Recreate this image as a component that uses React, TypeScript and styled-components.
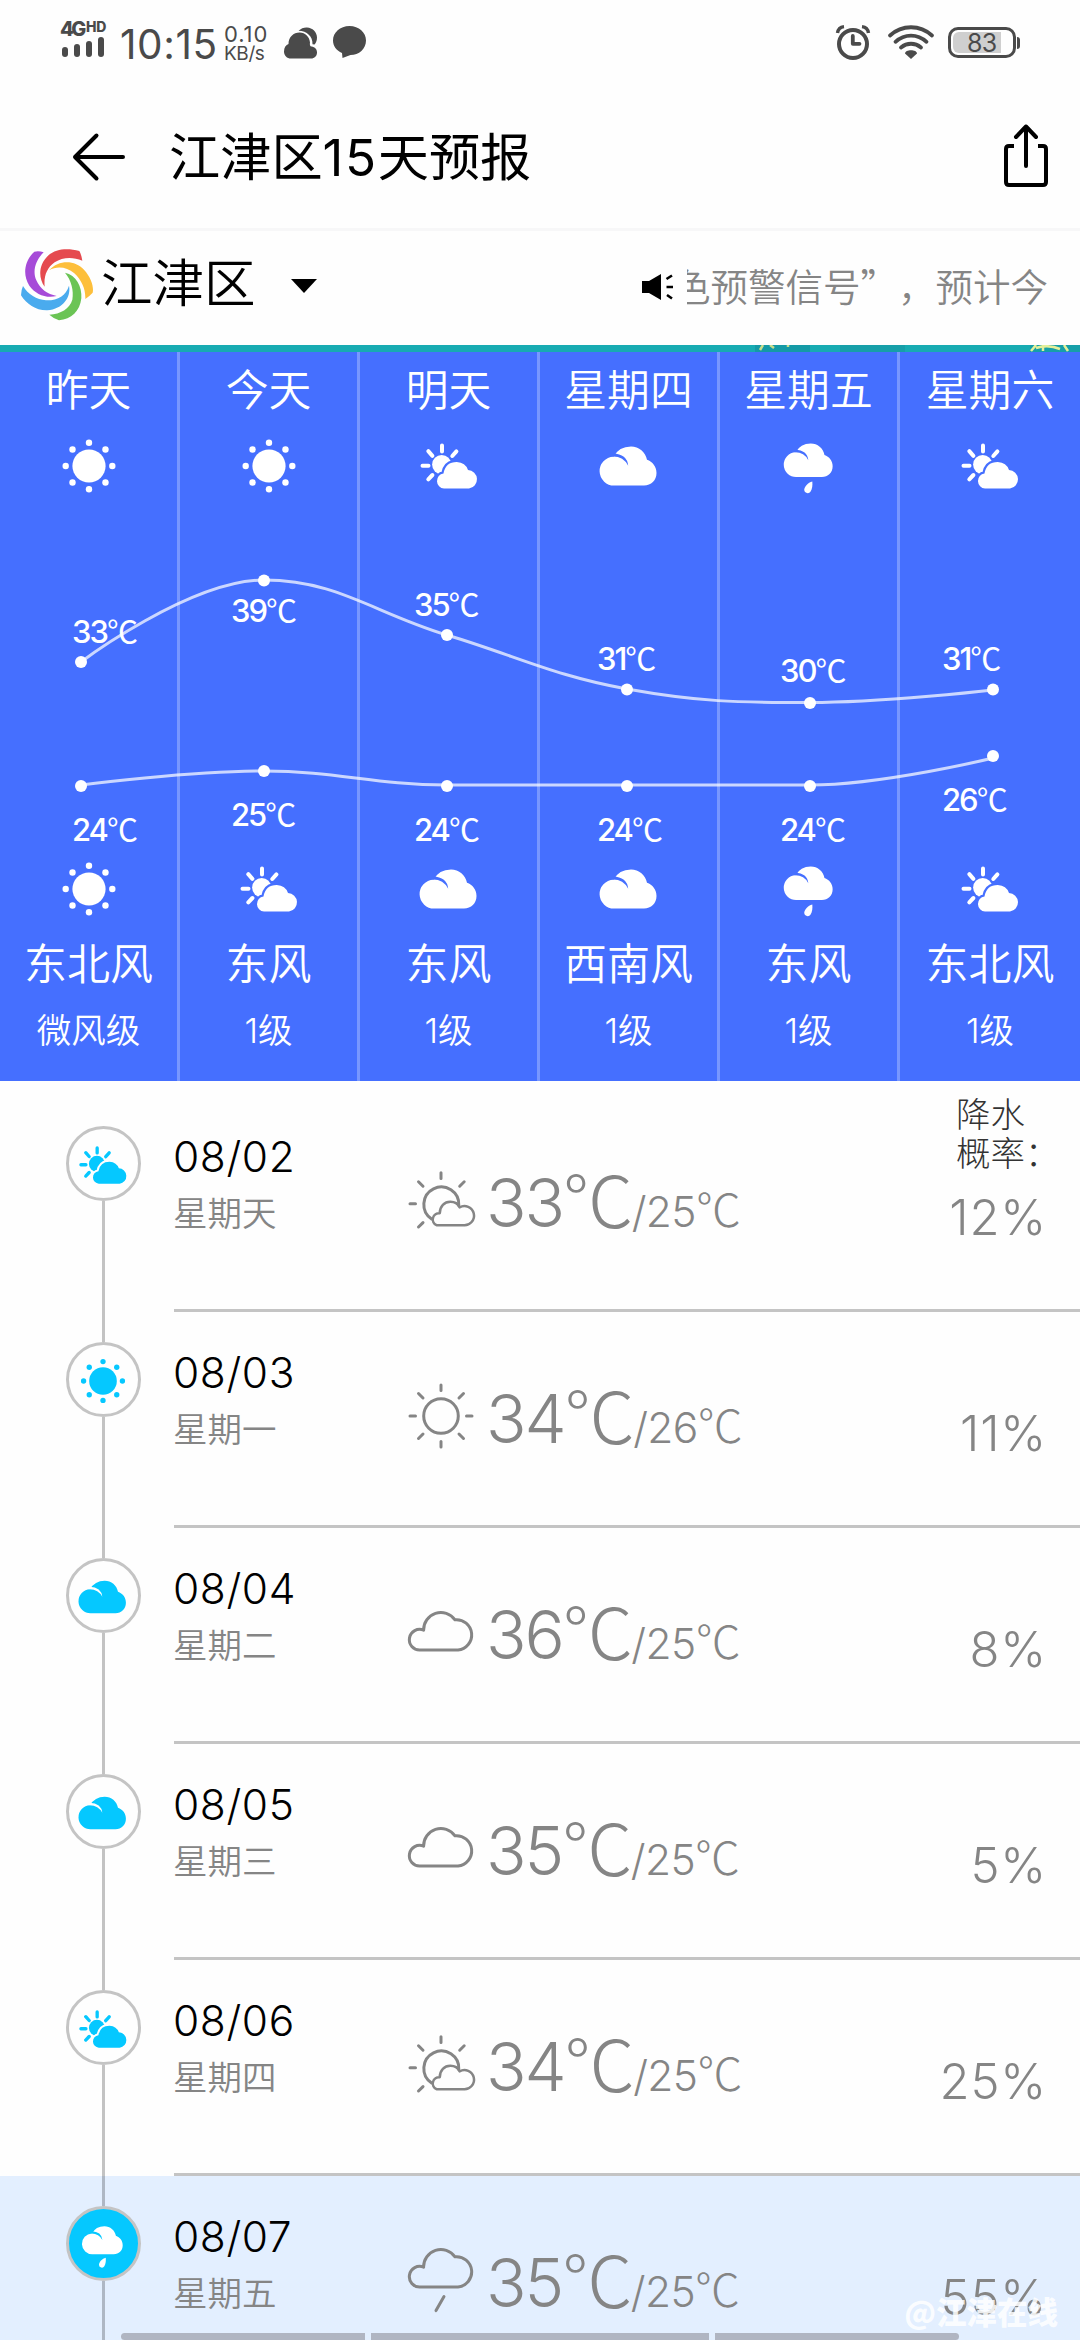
import React, { useId } from "react";
import styled, { createGlobalStyle } from "styled-components";

const GlobalStyle = createGlobalStyle`
  * { box-sizing: border-box; }
  body { margin: 0; background: #fefefe; }
`;

const GREY = "#858585";
const CYAN = "#05c8ff";

const Screen = styled.main`
  position: relative;
  display: flex;
  flex-direction: column;
  width: 1080px;
  height: 2340px;
  overflow: hidden;
  background: #fefefe;
  color: #000;
  font-family: Inter, "Noto Sans CJK SC", sans-serif;
  font-weight: 300;
  white-space: nowrap;
`;

/* ---------- status bar ---------- */

const StatusBar = styled.header`
  display: flex;
  justify-content: space-between;
  align-items: flex-start;
  flex: none;
  height: 86px;
  padding: 22px 60px 0 60px;
  color: #4a4a4a;
`;

const StatusGroup = styled.div`
  display: flex;
  align-items: flex-start;
`;

const Network = styled.div`
  display: flex;
  flex-direction: column;
  width: 46px;
`;

const NetworkLabel = styled.div`
  display: flex;
  align-items: flex-start;
  height: 15px;
  font-weight: 800;
  font-size: 20px;
  line-height: 15px;
  letter-spacing: -2.4px;
`;

const NetworkSup = styled.span`
  margin-left: 2px;
  font-size: 14px;
  line-height: 10px;
  letter-spacing: -0.2px;
`;

const SignalBars = styled.div`
  display: flex;
  align-items: flex-end;
  gap: 6px;
  height: 20px;
  padding-left: 2px;
`;

const SignalBar = styled.i<{ $h: number }>`
  width: 6px;
  height: ${(p) => p.$h}px;
  border-radius: 3px;
  background: currentColor;
`;

const Clock = styled.div`
  width: 98px;
  margin-left: 14px;
  font-size: 40.5px;
  font-weight: 400;
  line-height: 45px;
  letter-spacing: 0.6px;
`;

const Speed = styled.div`
  display: flex;
  flex-direction: column;
  width: 58px;
  margin-left: 6px;
  padding-top: 2px;
  font-weight: 400;
`;

const SpeedLine = styled.span<{ $size: number; $gap: number }>`
  font-size: ${(p) => p.$size}px;
  line-height: 20px;
  letter-spacing: ${(p) => p.$gap}px;
`;

const StatusIcon = styled.svg<{ $w: number; $h: number; $ml: number; $mt: number }>`
  display: block;
  width: ${(p) => p.$w}px;
  height: ${(p) => p.$h}px;
  margin: ${(p) => p.$mt}px 0 0 ${(p) => p.$ml}px;
  overflow: visible;
`;

const Battery = styled.div`
  display: flex;
  align-items: center;
  margin: 5px 0 0 14px;
`;

const BatteryShell = styled.div`
  width: 68px;
  height: 31px;
  padding: 2px;
  border: 3px solid currentColor;
  border-radius: 10px;
`;

const BatteryFill = styled.div`
  width: 48px;
  height: 21px;
  padding-left: 14px;
  border-radius: 6px 0 0 6px;
  background: #cfcfcf;
  font-size: 25px;
  font-weight: 400;
  line-height: 22px;
  letter-spacing: -0.8px;
`;

const BatteryTip = styled.i`
  width: 3px;
  height: 12px;
  margin-left: 1px;
  border-radius: 0 3px 3px 0;
  background: currentColor;
`;

/* ---------- title bar ---------- */

const TitleBar = styled.nav`
  display: flex;
  align-items: center;
  flex: none;
  height: 145px;
  padding: 0 30px 0 71px;
  border-bottom: 3px solid #f7f7f8;
`;

const BackIcon = styled.svg`
  width: 56px;
  height: 52px;
`;

const Title = styled.h1`
  flex: 1;
  margin: 0 0 0 42px;
  font-size: 51.2px;
  font-weight: 400;
  line-height: 60px;
`;

const Digits = styled.span`
  letter-spacing: 1.6px;
`;

const ShareIcon = styled.svg`
  width: 48px;
  height: 66px;
`;

/* ---------- city bar ---------- */

const CityBar = styled.section`
  display: flex;
  align-items: center;
  flex: none;
  height: 114px;
  padding: 0 32px 7px 21px;
`;

const Logo = styled.svg`
  width: 72px;
  height: 72px;
`;

const City = styled.div`
  width: 156px;
  margin: -4px 0 0 8px;
  font-size: 51.5px;
  line-height: 60px;
  font-weight: 350;
`;

const Caret = styled.i`
  margin: 3px 0 0 34px;
  border: 13px solid transparent;
  border-top: 14px solid #000;
  border-bottom: 0;
`;

const SpeakerIcon = styled.svg`
  width: 32px;
  height: 28px;
  margin: 5px 13px 0 auto;
`;

const Ticker = styled.div`
  display: flex;
  justify-content: flex-end;
  width: 361px;
  overflow: hidden;
  color: ${GREY};
  font-family: "Noto Sans CJK SC", sans-serif;
  font-size: 37.5px;
  font-weight: 350;
  line-height: 50px;
`;

const FullWidthMark = styled.span`
  width: 37.5px;
`;

const BannerEdge = styled.svg`
  display: block;
  flex: none;
  width: 1080px;
  height: 7px;
  background: #17abb2;
`;

/* ---------- six-day chart ---------- */

const Forecast = styled.section`
  position: relative;
  display: grid;
  grid-template-columns: repeat(6, 180px);
  flex: none;
  height: 729px;
  background: #456fff;
  color: #fff;
  font-weight: 350;
`;

const Day = styled.div`
  display: flex;
  flex-direction: column;
  align-items: center;
  padding-top: 14px;
  border-right: 3px solid rgba(255, 255, 255, 0.28);
  &:last-of-type { border-right: 0; }
`;

const DayName = styled.div`
  font-size: 42.8px;
  line-height: 50px;
`;

const DayIcon = styled.svg<{ $size: number; $mt?: number }>`
  display: block;
  width: ${(p) => p.$size}px;
  height: ${(p) => p.$size}px;
  margin-top: ${(p) => p.$mt ?? 0}px;
  overflow: visible;
`;

const Wind = styled.div`
  margin-top: 20px;
  font-size: 43px;
  line-height: 50px;
`;

const Level = styled.div`
  margin-top: 21px;
  font-size: 34.5px;
  line-height: 42px;
`;

const Chart = styled.svg`
  position: absolute;
  inset: 0;
  width: 1080px;
  height: 729px;
`;

const ChartLabel = styled.text`
  fill: #fff;
  font-size: 31px;
  font-weight: 450;
  letter-spacing: -2px;
`;

const ChartUnit = styled.tspan`
  font-family: "Noto Sans CJK SC", sans-serif;
  font-weight: 400;
`;

/* ---------- daily list ---------- */

const List = styled.section`
  display: flex;
  flex-direction: column;
  flex: none;
  padding-top: 15px;
`;

const Row = styled.article<{ $active: boolean }>`
  display: flex;
  flex: none;
  height: 216px;
  background: ${(p) => (p.$active ? "#e3efff" : "transparent")};
`;

const Timeline = styled.div`
  display: flex;
  flex-direction: column;
  align-items: center;
  width: 174px;
  padding-right: 33px;
  padding-left: 66px;
`;

const Rail = styled.i<{ $h?: number; $hidden?: boolean }>`
  width: 3px;
  height: ${(p) => (p.$h ? `${p.$h}px` : "auto")};
  flex: ${(p) => (p.$h ? "none" : "1")};
  background: ${(p) => (p.$hidden ? "transparent" : "rgba(0, 0, 0, 0.23)")};
`;

const Badge = styled.div<{ $active: boolean }>`
  display: flex;
  align-items: center;
  justify-content: center;
  flex: none;
  width: 75px;
  height: 75px;
  padding: 2px 2px 0 0;
  border: 3px solid #c4c4c4;
  border-radius: 50%;
  background: ${(p) => (p.$active ? CYAN : "#fefefe")};
  color: ${(p) => (p.$active ? "#fff" : CYAN)};
`;

const RowBody = styled.div`
  display: flex;
  flex: 1;
  color: ${GREY};
  border-bottom: 3px solid #c4c4c4;
`;

const DateCell = styled.div`
  width: 234px;
  padding-top: 36px;
`;

const DateText = styled.div`
  margin-left: -1px;
  color: #000;
  font-size: 42.5px;
  line-height: 50px;
  letter-spacing: 0.6px;
`;

const Weekday = styled.div`
  margin: 11px 0 0 -1px;
  font-size: 34.5px;
  font-weight: 350;
  line-height: 42px;
`;

const OutlineIcon = styled.svg`
  display: block;
  flex: none;
  width: 67px;
  height: 67px;
  margin-top: 71px;
  overflow: visible;
`;

const Temps = styled.div`
  display: flex;
  align-items: baseline;
  height: 80px;
  margin: 67px 0 0 11px;
  line-height: 80px;
`;

const High = styled.span`
  font-size: 67px;
  letter-spacing: -2.2px;
`;

const Low = styled.span`
  margin-bottom: 1px;
  font-size: 42.5px;
  letter-spacing: -0.6px;
`;

const Unit = styled.span`
  font-family: "Noto Sans CJK SC", sans-serif;
  font-size: 1.06em;
  line-height: 0;
`;

const RainCell = styled.div`
  display: flex;
  flex-direction: column;
  align-items: flex-end;
  width: 130px;
  margin-left: auto;
  padding-right: 33px;
`;

const RainLabel = styled.div`
  width: 91px;
  height: 92px;
  margin-top: -1px;
  color: #333;
  font-size: 34.5px;
  line-height: 39px;
`;

const Percent = styled.div`
  margin-top: 1px;
  font-size: 49px;
  line-height: 60px;
  letter-spacing: 0.8px;
`;

/* ---------- overlays ---------- */

const HomeHints = styled.div`
  position: absolute;
  left: 121px;
  bottom: 0;
  display: grid;
  grid-template-columns: 244px 338px 244px;
  gap: 6px;
`;

const Hint = styled.i`
  height: 7px;
  background: #b0b5c2;
  &:first-child { border-radius: 4px 0 0 4px; }
  &:last-child { border-radius: 0 4px 4px 0; }
`;

const Watermark = styled.div`
  position: absolute;
  right: 22px;
  bottom: 7px;
  color: rgba(255, 255, 255, 0.85);
  font-family: "Noto Sans CJK SC", sans-serif;
  font-size: 30.5px;
  font-weight: 900;
  line-height: 44px;
`;

type Kind = "sun" | "partly" | "cloud" | "rain";

const CLOUD =
  "M15.5 49.5 A14.3 14.3 0 0 1 14.5 20.7 Q20 10.5 32 10.5 C40 10.5 46.5 16 48 23.8 C53.5 25.8 57.5 30.5 57.5 37 C57.5 44.5 52 49.5 45 49.5 Z";
const NOTCH = "M14 17.6 Q28 18 29.2 29.8 Q24.5 20.6 14 20.6 Z";
const SMALL_CLOUD =
  "M25 52.5 A7.6 7.6 0 0 1 24.5 37.4 Q26.5 26 37.8 26 Q46.5 26.5 49 34 A9.3 9.3 0 0 1 50 52.5 Z";

function FilledIcon({ kind, size, mt }: { kind: Kind; size: number; mt?: number }) {
  const id = useId();
  return (
    <DayIcon viewBox="0 0 60 60" $size={size} $mt={mt} fill="currentColor">
      {kind === "sun" && (
        <>
          <circle cx="30" cy="30" r="16.6" />
          {[0, 1, 2, 3, 4, 5, 6, 7].map((i) => {
            const a = (i * Math.PI) / 4;
            return <circle key={i} cx={30 + 23.3 * Math.cos(a)} cy={30 + 23.3 * Math.sin(a)} r="3.2" />;
          })}
        </>
      )}
      {kind === "partly" && (
        <>
          <mask id={id}>
            <rect width="60" height="60" fill="#fff" />
            <path d={SMALL_CLOUD} fill="#000" stroke="#000" strokeWidth="4.6" />
          </mask>
          <circle cx="22.7" cy="28.6" r="9.6" mask={`url(#${id})`} />
          <path
            d="M23 9.5V15.5M3.5 29.7H9.5M9.3 15.2L13.4 19.8M37.4 15.4L33.3 20M9.3 43.3L13.4 39"
            fill="none"
            stroke="currentColor"
            strokeWidth="4"
            strokeLinecap="round"
          />
          <path d={SMALL_CLOUD} />
        </>
      )}
      {(kind === "cloud" || kind === "rain") && (
        <>
          <mask id={id}>
            <rect width="60" height="60" fill="#fff" />
            <path d={NOTCH} fill="#000" />
          </mask>
          <g transform={kind === "rain" ? "translate(4.2 -1.5) scale(0.86)" : undefined}>
            <path d={CLOUD} mask={`url(#${id})`} />
          </g>
          {kind === "rain" && (
            <path d="M33.3 45.4C29 46.4 25.2 50.6 25.2 54A3.5 3.5 0 0 0 31.6 55.6C33.4 52.4 33.6 49 33.3 45.4Z" />
          )}
        </>
      )}
    </DayIcon>
  );
}

const BIG_CLOUD =
  "M12 40A10.3 10.3 0 1 1 15.6 20.2A17.3 17.3 0 0 1 47 9.8A15.1 15.1 0 1 1 50 40Z";

function LineIcon({ kind }: { kind: Kind }) {
  return (
    <OutlineIcon viewBox="0 0 67 67" fill="none" stroke="currentColor" strokeWidth="3" strokeLinecap="round" strokeLinejoin="round">
      {kind === "sun" && (
        <>
          <circle cx="33" cy="33" r="17.3" />
          <path d="M33 2V7.5M33 58.5V64M2 33H7.5M58.5 33H64M10.5 10.5L15 15M51 51L55.5 55.5M55.5 10.5L51 15M10.5 55.5L15 51" />
        </>
      )}
      {kind === "partly" && (
        <>
          <path d="M23.6 52A17.5 17.5 0 1 1 50.8 38.4" />
          <path d="M33 5.8V11.4M2 36.8H7.5M10.5 14.8L15 19.2M56.2 14.8L51.7 19.2M10.5 60L15 55.6" />
          <path
            strokeWidth="2.5"
            d="M28.5 58.2A6.3 6.3 0 0 1 31.8 46.2C31.8 39 36.5 34.8 42.3 34.8C46.8 34.8 50.2 37.2 51.5 40.4A9.6 9.6 0 1 1 55.5 58.2Z"
          />
        </>
      )}
      {kind === "cloud" && <path d={BIG_CLOUD} transform="translate(0 11)" />}
      {kind === "rain" && (
        <>
          <path d={BIG_CLOUD} />
          <path d="M36 49.6L28 63.6" />
        </>
      )}
    </OutlineIcon>
  );
}

interface DayItem {
  name: string;
  top: Kind;
  bottom: Kind;
  wind: string;
  level: string;
}

const days: DayItem[] = [
  { name: "昨天", top: "sun", bottom: "sun", wind: "东北风", level: "微风级" },
  { name: "今天", top: "sun", bottom: "partly", wind: "东风", level: "1级" },
  { name: "明天", top: "partly", bottom: "cloud", wind: "东风", level: "1级" },
  { name: "星期四", top: "cloud", bottom: "cloud", wind: "西南风", level: "1级" },
  { name: "星期五", top: "rain", bottom: "rain", wind: "东风", level: "1级" },
  { name: "星期六", top: "partly", bottom: "partly", wind: "东北风", level: "1级" },
];

const chartX = [81, 264, 447, 627, 810, 993];
const labelX = [72, 231, 414, 597, 780, 942];
const highs = [
  { t: 33, y: 310, ly: 291 },
  { t: 39, y: 228.5, ly: 270 },
  { t: 35, y: 283, ly: 264 },
  { t: 31, y: 337.5, ly: 318 },
  { t: 30, y: 351, ly: 330 },
  { t: 31, y: 337.5, ly: 318 },
];
const lows = [
  { t: 24, y: 434, ly: 489 },
  { t: 25, y: 419, ly: 474 },
  { t: 24, y: 434, ly: 489 },
  { t: 24, y: 434, ly: 489 },
  { t: 24, y: 434, ly: 489 },
  { t: 26, y: 404, ly: 459 },
];

interface RowItem {
  date: string;
  week: string;
  kind: Kind;
  high: number;
  low: number;
  rain: number;
}

const rows: RowItem[] = [
  { date: "08/02", week: "星期天", kind: "partly", high: 33, low: 25, rain: 12 },
  { date: "08/03", week: "星期一", kind: "sun", high: 34, low: 26, rain: 11 },
  { date: "08/04", week: "星期二", kind: "cloud", high: 36, low: 25, rain: 8 },
  { date: "08/05", week: "星期三", kind: "cloud", high: 35, low: 25, rain: 5 },
  { date: "08/06", week: "星期四", kind: "partly", high: 34, low: 25, rain: 25 },
  { date: "08/07", week: "星期五", kind: "rain", high: 35, low: 25, rain: 55 },
];

export default function App() {
  return (
    <Screen>
      <GlobalStyle />
      <StatusBar>
        <StatusGroup>
          <Network>
            <NetworkLabel>
              4G<NetworkSup>HD</NetworkSup>
            </NetworkLabel>
            <SignalBars>
              {[10, 13, 16, 20].map((h) => (
                <SignalBar key={h} $h={h} />
              ))}
            </SignalBars>
          </Network>
          <Clock>10:15</Clock>
          <Speed>
            <SpeedLine $size={22} $gap={0.9}>0.10</SpeedLine>
            <SpeedLine $size={19} $gap={-0.4}>KB/s</SpeedLine>
          </Speed>
          <StatusIcon viewBox="0 0 33 32" $w={33} $h={32} $ml={2} $mt={5} fill="currentColor">
            <path d="M7 31.5C3 31.5 0 28.5 0 24.4C0 20.5 2 18 4.5 17C4.5 10 9.5 5.5 15.5 5.5C21.5 5.5 25.5 10 26 15.5C25.6 17.5 26 19.4 27.5 19.6C31 20 33 22.5 33 25.5C33 29 30.5 31.5 27 31.5Z" />
            <path d="M14.5 3.8C17 1.5 20 .3 23 .5C28.5 .8 33 5 33 10.5C33 13.5 32 16 30.5 17.5L28.5 17.2C28.8 9.5 23 4 14.5 3.8Z" />
          </StatusIcon>
          <StatusIcon viewBox="0 0 33 32" $w={33} $h={32} $ml={16} $mt={4} fill="currentColor">
            <path d="M16.5 0C26 0 33 6.5 33 14.5C33 23 26 29 17.5 29L9.5 32L9 27C3.5 24.5 0 20 0 14.5C0 6.5 7 0 16.5 0Z" />
          </StatusIcon>
        </StatusGroup>
        <StatusGroup>
          <StatusIcon viewBox="0 0 34 35" $w={34} $h={35} $ml={0} $mt={3} fill="none" stroke="currentColor">
            <circle cx="17" cy="19" r="14" strokeWidth="4" />
            <path d="M16.8 11V18.8H23.5" strokeWidth="3.8" strokeLinecap="round" strokeLinejoin="round" />
            <path d="M1.5 8C2 4.5 4.5 2 8 1.6M32.5 8C32 4.5 29.5 2 26 1.6" strokeWidth="3.4" />
          </StatusIcon>
          <StatusIcon viewBox="0 0 46 34" $w={46} $h={34} $ml={18} $mt={3} fill="none" stroke="currentColor" strokeWidth="3.8" strokeLinecap="round">
            <path d="M2 10.5C14 -.5 32 -.5 44 10.5M7.5 16.8C16.5 8.5 29.5 8.5 38.5 16.8M13 22.5C19 17.5 27 17.5 33 22.5" />
            <path d="M23 34L17 28.5C17 24 29 24 29 28.5Z" fill="currentColor" stroke="none" />
          </StatusIcon>
          <Battery>
            <BatteryShell>
              <BatteryFill>83</BatteryFill>
            </BatteryShell>
            <BatteryTip />
          </Battery>
        </StatusGroup>
      </StatusBar>

      <TitleBar>
        <BackIcon viewBox="0 0 56 52" fill="none" stroke="#000" strokeWidth="4" strokeLinecap="round" strokeLinejoin="round">
          <path d="M52 26H4M25.5 4.5L4 26L25.5 47.5" />
        </BackIcon>
        <Title>
          江津区<Digits>15</Digits>天预报
        </Title>
        <ShareIcon viewBox="0 0 48 66" fill="none" stroke="#000" strokeWidth="4" strokeLinecap="round" strokeLinejoin="round">
          <path d="M24 42V2.5M14 13L24 2.500L34 13" />
          <path d="M12 22H7Q4 22 4 25V58Q4 61 7 61H41Q44 61 44 58V25Q44 22 41 22H36" strokeLinecap="butt" />
        </ShareIcon>
      </TitleBar>

      <CityBar>
        <Logo viewBox="33 40 216 216">
          <path fill="#a64bd8" d="M73 48Q87 45 101 50C78 72 66 105 79 134C90 160 112 176 140 181C108 189 77 176 58 150C37 118 43 76 73 48Z" />
          <path fill="#e54a4f" d="M104 153C84 126 86 86 114 60C140 37 176 38 208 46Q214 56 217 75C188 63 158 64 134 80C110 97 101 122 104 153Z" />
          <path fill="#fdbf3b" d="M117 104C148 70 196 74 222 102C244 126 252 155 248 171Q238 182 226 190C227 160 215 134 193 113C170 94 142 90 117 104Z" />
          <path fill="#6bc455" d="M165 111C198 118 217 152 214 188C210 226 184 251 147 254Q130 248 118 237C152 235 179 219 187 192C192 165 184 133 165 111Z" />
          <path fill="#4aabee" d="M39 151C54 176 80 192 108 194C144 195 167 180 177 150C184 184 159 220 112 224C78 225 50 206 33 179Q33 164 39 151Z" />
        </Logo>
        <City>江津区</City>
        <Caret />
        <SpeakerIcon viewBox="0 0 32 28">
          <path d="M0 8H7L19 1V27L7 20H0Z" />
          <path d="M24.5 6L30 2.5M24.5 14H31M25 22L30 25.5" stroke="#000" strokeWidth="2.6" />
        </SpeakerIcon>
        <Ticker>
          色预警信号<FullWidthMark>”</FullWidthMark>，预计今
        </Ticker>
      </CityBar>

      <BannerEdge viewBox="0 0 1080 7" fill="none">
        <path d="M755 0H810V7H755Z" fill="#149aa6" />
        <path d="M840 0H905V7H840ZM1030 0H1080V7H1030Z" fill="#169fa9" />
        <path d="M763 0L760 5M770 0L774 3M788 0V2" stroke="#c9dc8a" strokeWidth="2.5" />
        <path d="M1036 0L1031 6M1043 0V6M1036 3Q1048 -1 1060 4M1064 0L1068 6" stroke="#e4ef9a" strokeWidth="2.5" />
      </BannerEdge>

      <Forecast>
        {days.map((d) => (
          <Day key={d.name}>
            <DayName>{d.name}</DayName>
            <FilledIcon kind={d.top} size={60} mt={20} />
            <FilledIcon kind={d.bottom} size={60} mt={363} />
            <Wind>{d.wind}</Wind>
            <Level>{d.level}</Level>
          </Day>
        ))}
        <Chart viewBox="0 0 1080 729">
          <g fill="none" stroke="rgba(255,255,255,0.72)" strokeWidth="3">
            <path d="M81 310C81 310 190 228 264 228C337 228 374 261 447 283C519 305 555 324 627 337C699 350 737 350.5 810 350.5C883 350.5 993 338 993 338" />
            <path d="M81 433C81 433 190 419 264 419C337 419 374 433 447 433H810C883 433 993 406 993 406" />
          </g>
          {[highs, lows].map((series) =>
            series.map((p, i) => (
              <g key={i}>
                <circle cx={chartX[i]} cy={p.y} r="6" fill="#fff" />
                <ChartLabel x={labelX[i]} y={p.ly}>
                  {p.t}
                  <ChartUnit>℃</ChartUnit>
                </ChartLabel>
              </g>
            ))
          )}
        </Chart>
      </Forecast>

      <List>
        {rows.map((r, i) => {
          const active = i === rows.length - 1;
          return (
            <Row key={r.date} $active={active}>
              <Timeline>
                <Rail $h={30} $hidden={i === 0} />
                <Badge $active={active}>
                  <FilledIcon kind={r.kind} size={50} />
                </Badge>
                <Rail />
              </Timeline>
              <RowBody>
                <DateCell>
                  <DateText>{r.date}</DateText>
                  <Weekday>{r.week}</Weekday>
                </DateCell>
                <LineIcon kind={r.kind} />
                <Temps>
                  <High>
                    {r.high}
                    <Unit>℃</Unit>
                  </High>
                  <Low>
                    /{r.low}
                    <Unit>℃</Unit>
                  </Low>
                </Temps>
                <RainCell>
                  <RainLabel>
                    {i === 0 && (
                      <>
                        降水
                        <br />
                        概率：
                      </>
                    )}
                  </RainLabel>
                  <Percent>{r.rain}%</Percent>
                </RainCell>
              </RowBody>
            </Row>
          );
        })}
      </List>

      <HomeHints>
        <Hint />
        <Hint />
        <Hint />
      </HomeHints>
      <Watermark>@江津在线</Watermark>
    </Screen>
  );
}
